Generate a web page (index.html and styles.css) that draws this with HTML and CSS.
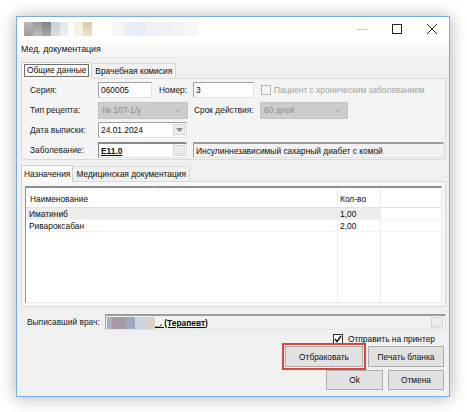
FILE: index.html
```html
<!DOCTYPE html>
<html lang="ru">
<head>
<meta charset="utf-8">
<link rel="stylesheet" href="styles.css">
</head>
<body>
<div class="screen">
  <div class="window">
    <div class="titlebar">
      <div class="title-blur">
        <span class="b b1"></span><span class="b b2"></span><span class="b b3"></span><span class="b b4"></span><span class="b b5"></span><span class="gap8"></span><span class="b b6"></span><span class="b b7"></span><span class="gap20"></span><span class="b b8"></span><span class="b b9"></span><span class="b b10"></span><span class="b b11"></span><span class="b b12"></span><span class="b b13"></span><span class="b b14"></span>
      </div>
      <div class="controls">
        <span class="ctl ctl-min"><svg width="10" height="10" viewBox="0 0 10 10"><path d="M0 5.5h10" stroke="#c8c8c8" stroke-width="1"/></svg></span>
        <span class="ctl"><svg width="10" height="10" viewBox="0 0 10 10"><rect x="0.5" y="0.5" width="9" height="9" fill="none" stroke="#222" stroke-width="1"/></svg></span>
        <span class="ctl"><svg width="10" height="10" viewBox="0 0 10 10"><path d="M0 0L10 10M10 0L0 10" stroke="#222" stroke-width="1"/></svg></span>
      </div>
    </div>
    <div class="header">Мед. документация</div>
    <div class="body">
      <div class="tabs">
        <div class="tab tab-active"><span class="focus">Общие данные</span></div>
        <div class="tab">Врачебная комисия</div>
      </div>
      <div class="panel panel-top">
        <div class="row">
          <span class="label">Серия:</span>
          <span class="field w-series">060005</span>
          <span class="label2 l-num">Номер:</span>
          <span class="field w-num">3</span>
          <span class="check check-dis"></span>
          <span class="dis-text">Пациент с хроническим заболеванием</span>
        </div>
        <div class="row">
          <span class="label">Тип рецепта:</span>
          <span class="combo w-type">№ 107-1/у<svg class="chev" width="8" height="5" viewBox="0 0 8 5"><path d="M0.5 0.5L4 4L7.5 0.5" fill="none" stroke="#a8a8a8"/></svg></span>
          <span class="label2 l-term">Срок действия:</span>
          <span class="combo w-term">60 дней<svg class="chev" width="8" height="5" viewBox="0 0 8 5"><path d="M0.5 0.5L4 4L7.5 0.5" fill="none" stroke="#a8a8a8"/></svg></span>
        </div>
        <div class="row">
          <span class="label">Дата выписки:</span>
          <span class="field w-date">24.01.2024<span class="mini-btn"><svg width="7" height="4" viewBox="0 0 7 4"><path d="M0 0h7L3.5 4z" fill="#8a8a8a"/></svg></span></span>
        </div>
        <div class="row">
          <span class="label">Заболевание:</span>
          <span class="field field-dark w-date"><b class="link">E11.0</b><span class="mini-btn dots">...</span></span>
          <span class="field field-ro w-desc">Инсулиннезависимый сахарный диабет с комой</span>
        </div>
      </div>
      <div class="tabs tabs2">
        <div class="tab tab-active">Назначения</div>
        <div class="tab">Медицинская документация</div>
      </div>
      <div class="panel panel-grid">
        <div class="grid">
          <div class="grow ghead">
            <span class="c c-name">Наименование</span>
            <span class="c c-qty">Кол-во</span>
            <span class="c c-rest"></span>
          </div>
          <div class="grow gsel">
            <span class="c c-name">Иматиниб</span>
            <span class="c c-qty">1,00</span>
            <span class="c c-rest"></span>
          </div>
          <div class="grow">
            <span class="c c-name">Ривароксабан</span>
            <span class="c c-qty">2,00</span>
            <span class="c c-rest"></span>
          </div>
          <div class="grow gempty">
            <span class="c c-name"></span>
            <span class="c c-qty"></span>
            <span class="c c-rest"></span>
          </div>
        </div>
      </div>
      <div class="doctor-row">
        <span class="doc-label">Выписавший врач:</span>
        <span class="field field-ro doc-field">
          <span class="nb n1"></span><span class="nb n2"></span><span class="nb n3"></span><span class="nb n4"></span><span class="nb n5"></span><b class="link">_. (Терапевт)</b>
          <span class="mini-btn dots doc-dots">...</span>
        </span>
      </div>
      <div class="printer-row">
        <span class="check"><svg width="8" height="8" viewBox="0 0 8 8"><path d="M1 4L3 6.5L7 1" fill="none" stroke="#111" stroke-width="1.4"/></svg></span>
        <span>Отправить на принтер</span>
      </div>
      <div class="btn-row">
        <span class="btn btn-reject">Отбраковать</span>
        <span class="btn btn-print">Печать бланка</span>
      </div>
      <div class="btn-row">
        <span class="btn btn-ok">Ok</span>
        <span class="btn btn-cancel">Отмена</span>
      </div>
    </div>
  </div>
</div>
</body>
</html>
```
FILE: styles.css
```css
* { box-sizing: border-box; }
html, body { margin: 0; padding: 0; background: #ffffff; }
body {
  font-family: "Liberation Sans", Arial, sans-serif;
  font-size: 8.4px;
  color: #0d0d0d;
  width: 467px;
  height: 412px;
  overflow: hidden;
  white-space: nowrap;
}
.screen { padding: 16px 0 0 16px; }
.window {
  width: 434px;
  height: 381px;
  border: 1px solid #7aace0;
  background: #f0f0f0;
  box-shadow: 0 1px 16px rgba(0,0,0,0.32);
  display: flex;
  flex-direction: column;
}
.titlebar {
  height: 24px;
  background: #ffffff;
  display: flex;
  align-items: center;
  justify-content: space-between;
  padding-left: 7px;
}
.title-blur { display: flex; height: 14px; align-items: stretch; }
.b { display: block; width: 9px; }
.b1 { background: linear-gradient(#b8b8b8, #9c9c9c); }
.b2 { background: linear-gradient(#9a9a9a, #bdbdbd); }
.b3 { background: linear-gradient(#7d8380, #a9aaa8); }
.b4 { background: linear-gradient(#c7d3d6, #d9dfe0); }
.b5 { background: linear-gradient(#dfe6e8, #eef0f0); width: 8px; }
.gap8 { width: 6px; }
.b6 { background: linear-gradient(#f7eedf, #f6f1e7); }
.b7 { background: linear-gradient(#d9caa8, #ece3cf); }
.gap20 { width: 20px; }
.b8 { background: #f7f3f7; width: 12px; }
.b9 { background: #e9eef8; width: 12px; }
.b10 { background: #e4edf7; width: 10px; }
.b11 { background: #f2eef3; width: 14px; }
.b12 { background: #eef0f4; width: 12px; }
.b13 { background: #f3f3f5; width: 12px; }
.b14 { background: #f6f6f8; width: 14px; }
.controls { display: flex; height: 24px; }
.ctl { width: 35px; display: flex; align-items: center; justify-content: center; }
.header {
  height: 17px;
  background: linear-gradient(#fbfbfb, #f4f4f4);
  padding-left: 4px;
  display: flex;
  align-items: center;
  font-size: 8.8px;
  color: #111;
  border-bottom: 1px solid #ececec;
}
.body {
  flex: 1;
  padding: 4px 3px 0 4px;
  display: flex;
  flex-direction: column;
}
.tabs { display: flex; height: 16px; align-items: flex-end; padding-left: 1px; }
.tab {
  height: 15px;
  padding: 0 3px;
  border: 1px solid #d9d9d9;
  border-bottom: none;
  background: #f0f0f0;
  display: flex;
  align-items: center;
  margin-left: -1px;
}
.tab-active {
  height: 17px;
  background: #fbfbfb;
  border-color: #cfcfcf;
  margin-bottom: -1px;
  position: relative;
  z-index: 1;
  padding: 0 2px 1px;
}
.focus {
  border: 1px solid #6e6e6e;
  padding: 0 2px;
  line-height: 11px;
}
.panel {
  border: 1px solid #d9d9d9;
  background: #f4f4f4;
}
.panel-top {
  height: 82px;
  padding: 3px 0 0 8px;
  display: flex;
  flex-direction: column;
  gap: 4px;
}
.row { display: flex; align-items: center; height: 16px; }
.label { width: 68px; color: #1a1a1a; }
.label2 { color: #1a1a1a; }
.field {
  height: 16px;
  background: #fdfdfd;
  border: 1px solid #a0a0a0;
  border-right-color: #e2e2e2;
  border-bottom-color: #e2e2e2;
  padding-left: 2px;
  display: flex;
  align-items: center;
  position: relative;
}
.field-dark { border-top: 2px solid #8a8a8a; border-left-color: #8a8a8a; }
.field-ro { background: #f2f2f2; border-top: 2px solid #9c9c9c; }
.w-series { width: 54px; }
.l-num { margin-left: 7px; width: 34px; }
.w-num { width: 61px; }
.check {
  width: 10px; height: 10px;
  border: 1px solid #333;
  background: #fff;
  display: inline-flex;
  align-items: center;
  justify-content: center;
}
.check-dis { border-color: #b5b5b5; background: #f4f4f4; margin-left: 7px; }
.dis-text { color: #a3a3a3; margin-left: 3px; }
.combo {
  height: 17px;
  background: #cccccc;
  border: 1px solid #c4c4c4;
  color: #8c8c8c;
  padding-left: 3px;
  display: flex;
  align-items: center;
  justify-content: space-between;
  padding-right: 5px;
}
.w-type { width: 90px; }
.l-term { margin-left: 6px; width: 66px; }
.w-term { width: 88px; }
.w-date { width: 89px; }
.w-desc { width: 251px; margin-left: 6px; }
.mini-btn {
  position: absolute;
  right: 1px;
  top: 1px;
  width: 12px;
  height: 11px;
  background: #ececec;
  border: 1px solid #d6d6d6;
  display: flex;
  align-items: center;
  justify-content: center;
  color: #9a9a9a;
  font-size: 7px;
}
.dots { align-items: flex-end; line-height: 7px; }
.link { text-decoration: underline; font-weight: bold; }
.tabs2 { margin-top: 5px; }
.panel-grid {
  height: 126px;
  padding: 4px 3px 3px 3px;
  background: #f7f7f7;
}
.grid {
  height: 100%;
  border: 1px solid #8f8f8f;
  border-top: 2px solid #8f8f8f;
  border-right-color: #e8e8e8;
  border-bottom-color: #e8e8e8;
  background: #ffffff;
  display: flex;
  flex-direction: column;
}
.grow { display: flex; height: 12px; border-bottom: 1px solid #f2f2f2; }
.ghead { height: 20px; border-bottom: 1px solid #e2e2e2; }
.ghead .c { align-items: center; padding-top: 2px; }
.gsel .c-name, .gsel .c-qty { background: #ececec; }
.gempty { flex: 1; border-bottom: none; }
.c { display: flex; align-items: center; padding-left: 4px; }
.c-name { width: 311px; padding-left: 3px; }
.ghead .c-name { padding-left: 4px; }
.c-qty { width: 44px; border-left: 1px solid #ececec; border-right: 1px solid #ececec; padding-left: 2px; }
.c-rest { flex: 1; }
.doctor-row {
  display: flex;
  align-items: center;
  margin-top: 7px;
  height: 16px;
  padding-left: 6px;
}
.doc-label { width: 78px; color: #1a1a1a; }
.doc-field { width: 341px; padding-left: 1px; }
.nb { display: block; height: 12px; width: 11px; }
.n1 { background: #a6b0c4; width: 5px; }
.n2 { background: #a79aa5; width: 14px; }
.n3 { background: #9eaac0; width: 9px; }
.n4 { background: #c9d6e2; width: 10px; }
.n5 { background: #dcd0c2; width: 10px; }
.doc-dots { right: 2px; top: 1px; height: 11px; }
.printer-row {
  display: flex;
  align-items: center;
  justify-content: flex-end;
  gap: 5px;
  height: 11px;
  margin-top: 3px;
  padding-right: 11px;
}
.btn-row {
  display: flex;
  justify-content: flex-end;
  gap: 5px;
  margin-top: 2px;
  padding-right: 2px;
}
.btn-row + .btn-row { margin-top: 3px; }
.btn {
  height: 21px;
  background: #e1e1e1;
  border: 1px solid #adadad;
  display: flex;
  align-items: center;
  justify-content: center;
  color: #111;
}
.btn-reject { width: 78px; outline: 2px solid #d9453e; outline-offset: 1px; }
.btn-print { width: 76px; }
.btn-ok { width: 57px; height: 20px; }
.btn-cancel { width: 56px; height: 20px; }
```
